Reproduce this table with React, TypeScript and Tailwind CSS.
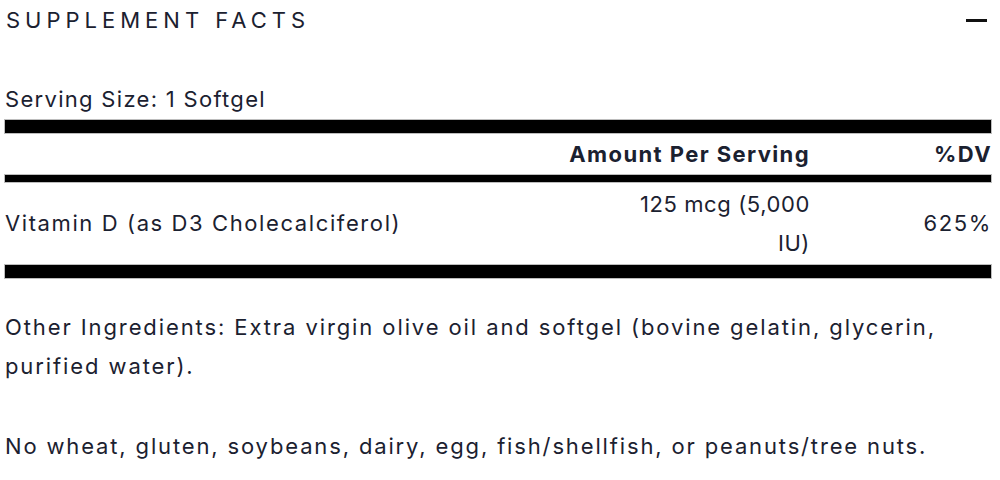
export default function App() {
    return (
        <div className="w-[1000px] h-[480px] bg-white text-[#1b2130] font-['Inter',sans-serif] overflow-hidden">
            <div className="pl-[4px] pr-[8px]">
                {/* Title */}
                <div className="flex items-center justify-between h-[40px] pl-[2px]">
                    <h2 className="text-[22px] tracking-[5px] leading-[40px] font-normal">SUPPLEMENT FACTS</h2>
                    <div className="w-[21px] h-[3px] bg-[#111] mr-[5px]" />
                </div>

                <div className="pt-[40px] text-[22px] tracking-[1.3px] leading-[39px] pl-[1px]">Serving Size: 1 Softgel</div>

                <div className="h-[15px] bg-black border border-[#bdbdbd]" />

                {/* Header row */}
                <div className="grid grid-cols-[1fr_200px_182px] h-[40px] items-center text-[22px] tracking-[1.4px] font-bold">
                    <div />
                    <div className="flex justify-end whitespace-nowrap">Amount Per Serving</div>
                    <div className="flex justify-end whitespace-nowrap">%DV</div>
                </div>

                <div className="h-[9px] bg-black border border-[#bdbdbd]" />

                {/* Nutrient row */}
                <div className="grid grid-cols-[1fr_200px_182px] items-center text-[22px] tracking-[1.6px] leading-[39px] h-[81px]">
                    <div className="pl-[1px]">Vitamin D (as D3 Cholecalciferol)</div>
                    <div className="text-right tracking-[0.6px]">125 mcg (5,000 IU)</div>
                    <div className="text-right">625%</div>
                </div>

                <div className="h-[15px] bg-black border border-[#bdbdbd]" />

                <p className="mt-[29px] text-[22px] tracking-[1.9px] leading-[39px] pl-[1px]">
                    Other Ingredients: Extra virgin olive oil and softgel (bovine gelatin, glycerin, purified water).
                </p>

                <p className="mt-[41px] text-[22px] tracking-[1.85px] leading-[39px] pl-[1px]">
                    No wheat, gluten, soybeans, dairy, egg, fish/shellfish, or peanuts/tree nuts.
                </p>
            </div>
        </div>
    )
}
